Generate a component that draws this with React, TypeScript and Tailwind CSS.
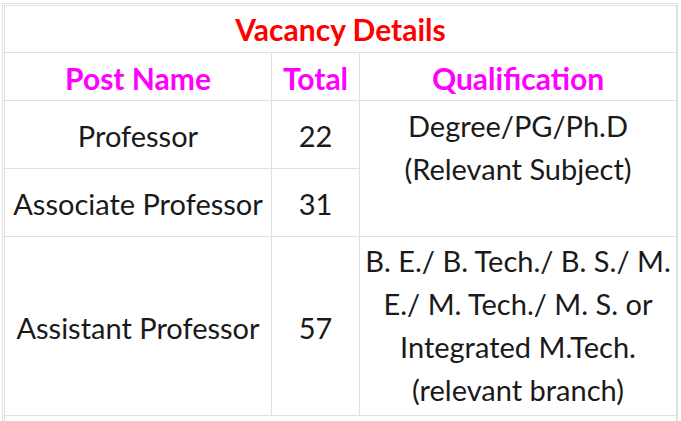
import React from "react";

const cell = "border border-[#e0e0e0] text-center align-middle p-0";
const body = `${cell} pt-[2px]`;
const head = `${cell} pt-[4px] font-bold text-[30px] text-[#ff00ff]`;

export default function App() {
  return (
    <div className="h-[421px] w-[681px] overflow-hidden bg-white" style={{ fontFamily: "Lato, 'Open Sans', sans-serif" }}>
      <div className="ml-[2px] mt-[3px] w-[676px] border border-[#e0e0e0] p-px">
        <table className="w-[672px] border-collapse table-fixed text-[29px] leading-[43px] text-[#1a1a1a]">
          <colgroup>
            <col className="w-[267px]" />
            <col className="w-[88px]" />
            <col className="w-[317px]" />
          </colgroup>
          <tbody>
            <tr className="h-[47px]">
              <td colSpan={3} className={`${cell} font-bold text-[30px] text-[#ff0000]`}>Vacancy Details</td>
            </tr>
            <tr className="h-[48px]">
              <td className={head}>Post Name</td>
              <td className={head}>Total</td>
              <td className={head}>Qualification</td>
            </tr>
            <tr className="h-[68px]">
              <td className={body}>Professor</td>
              <td className={body}>22</td>
              <td rowSpan={2} className={`${cell} align-top pt-[3px] px-0`}>
                Degree/PG/Ph.D<br />(Relevant Subject)
              </td>
            </tr>
            <tr className="h-[68px]">
              <td className={body}>Associate Professor</td>
              <td className={body}>31</td>
            </tr>
            <tr className="h-[179px]">
              <td className={body}>Assistant Professor</td>
              <td className={body}>57</td>
              <td className={`${cell} align-top pt-[2px] px-0`}>
                B. E./ B. Tech./ B. S./ M.<br />E./ M. Tech./ M. S. or<br />Integrated M.Tech.<br />(relevant branch)
              </td>
            </tr>
            <tr className="h-[60px]">
              <td colSpan={3} className={cell}></td>
            </tr>
          </tbody>
        </table>
      </div>
    </div>
  );
}
